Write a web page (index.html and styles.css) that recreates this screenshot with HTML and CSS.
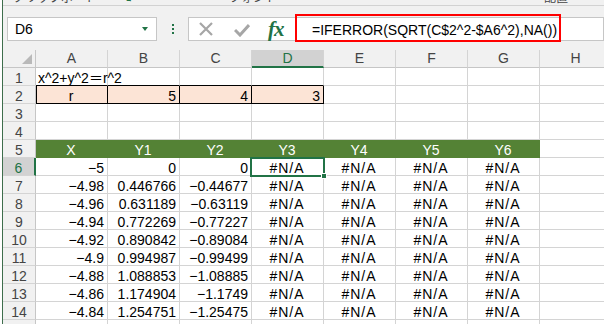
FILE: index.html
```html
<!DOCTYPE html>
<html lang="ja">
<head>
  <meta charset="UTF-8" />
  <meta name="viewport" content="width=device-width, initial-scale=1" />
  <title>Book1 - Excel</title>
  <link rel="stylesheet" href="styles.css">
</head>

<body>
  <div class="window">

    <!-- bottom edge of the ribbon -->
    <div class="ribbon-tail">
      <span class="grp grp-clip">クリップボード</span>
      <span class="launcher">↘</span>
      <span class="grp grp-font">フォント</span>
      <span class="grp grp-align">配置</span>
    </div>

    <!-- Formula bar -->
    <div class="formula-bar">
      <div class="name-box">
        <span>D6</span>
        <span class="drop"></span>
      </div>
      <div class="grip"><i></i><i></i><i></i></div>
      <div class="fx-buttons">
        <svg class="btn-cancel" width="16" height="16" viewBox="0 0 16 16">
          <path d="M2 2 L14 14 M14 2 L2 14" stroke="#a6a6a6" stroke-width="2.2" fill="none" />
        </svg>
        <svg class="btn-enter" width="16" height="14" viewBox="0 0 16 14">
          <path d="M1 7 L6 12 L15 2" stroke="#a6a6a6" stroke-width="3" fill="none" />
        </svg>
        <span class="fx">fx</span>
      </div>
      <div class="formula-input">
        <span>=IFERROR(SQRT(C$2^2-$A6^2),NA())</span>
        <div class="highlight"></div>
      </div>
    </div>

    <!-- Worksheet -->
    <div class="sheet" id="sheet"></div>
  </div>

  <script>
    const sheet = document.getElementById('sheet');
    const cols = ['A', 'B', 'C', 'D', 'E', 'F', 'G', 'H'];

    function addCell(text, cls) {
      const div = document.createElement('div');
      div.className = cls;
      div.textContent = text;
      sheet.appendChild(div);
      return div;
    }

    // column headers
    const corner = addCell('', 'corner');
    corner.innerHTML = '<svg width="10" height="10" viewBox="0 0 10 10"><polygon points="10,0 10,10 0,10" fill="#b9b9b9"/></svg>';
    cols.forEach(c => addCell(c, c === 'D' ? 'col-head active' : 'col-head'));

    // x, y1, y2 for rows 6..15
    const data = [
      ['−5', '0', '0'],
      ['−4.98', '0.446766', '−0.44677'],
      ['−4.96', '0.631189', '−0.63119'],
      ['−4.94', '0.772269', '−0.77227'],
      ['−4.92', '0.890842', '−0.89084'],
      ['−4.9', '0.994987', '−0.99499'],
      ['−4.88', '1.088853', '−1.08885'],
      ['−4.86', '1.174904', '−1.1749'],
      ['−4.84', '1.254751', '−1.25475'],
      ['−4.82', '1.329511', '−1.32951']
    ];

    for (let r = 1; r <= 15; r++) {
      addCell(r, r === 6 ? 'row-head active' : 'row-head');

      cols.forEach((c, i) => {
        let text = '';
        let cls = 'cell';

        if (r === 1) {
          if (i === 0) text = 'x^2+y^2＝r^2';
          if (i < 4) cls += ' over-box';
        } else if (r === 2) {
          if (i === 0) { text = 'r'; cls += ' peach boxed first center'; }
          if (i === 1) { text = '5'; cls += ' peach boxed num'; }
          if (i === 2) { text = '4'; cls += ' peach boxed num'; }
          if (i === 3) { text = '3'; cls += ' peach boxed num'; }
        } else if (r === 5) {
          if (i < 7) {
            text = i === 0 ? 'X' : 'Y' + i;
            cls += ' head';
          }
        } else if (r >= 6) {
          const row = data[r - 6];
          if (i < 3) { text = row[i]; cls += ' num'; }
          else if (i < 7) { text = '#N/A'; cls += ' center err'; }
          if (r === 6 && c === 'D') cls += ' selected';
        }

        addCell(text, cls);
      });
    }
  </script>
</body>
</html>
```

FILE: styles.css
```css
body {
  margin: 0;
  background-color: #fff;
  font-family: 'Liberation Sans', 'Noto Sans CJK JP', sans-serif;
  font-size: 14px;
  color: #000;
  overflow: hidden;
}

.window {
  margin-left: 2px;
  border-left: 1px solid #3e6e4c;
  height: 324px;
  overflow: hidden;
  background-color: #f1f1f1;
}

/* Ribbon tail */
.ribbon-tail {
  display: flex;
  height: 5px;
  overflow: hidden;
  border-bottom: 1px solid #d2d2d2;
  font-size: 12px;
  line-height: 12px;
  color: #444;
}

.ribbon-tail span {
  margin-top: -8px;
  white-space: nowrap;
}

.grp-clip {
  margin-left: 10px;
}

.launcher {
  margin-left: 24px;
  color: #217346;
}

.grp-font {
  margin-left: 96px;
}

.grp-align {
  margin-left: 267px;
}

/* Formula bar */
.formula-bar {
  display: flex;
  align-items: center;
  padding: 11px 0 9px 4px;
}

.name-box {
  display: flex;
  justify-content: space-between;
  align-items: center;
  box-sizing: border-box;
  width: 150px;
  height: 24px;
  padding: 0 8px 0 7px;
  background-color: #fff;
  border: 1px solid #c6c6c6;
}

.drop {
  width: 0;
  height: 0;
  border-left: 3px solid transparent;
  border-right: 3px solid transparent;
  border-top: 4px solid #217346;
}

.grip {
  display: flex;
  flex-direction: column;
  gap: 2px;
  margin-left: 15px;
}

.grip i {
  display: block;
  width: 2px;
  height: 2px;
  background-color: #217346;
}

.fx-buttons {
  display: flex;
  align-items: center;
  box-sizing: border-box;
  width: 107px;
  height: 24px;
  margin-left: 14px;
  background-color: #fff;
  border: 1px solid #c6c6c6;
  border-right: none;
}

.btn-cancel {
  margin-left: 9px;
}

.btn-enter {
  margin-left: 20px;
  margin-top: 2px;
}

.fx {
  margin-left: 18px;
  font-family: 'Liberation Serif', serif;
  font-style: italic;
  font-weight: bold;
  font-size: 21px;
  color: #217346;
  letter-spacing: -1px;
}

.formula-input {
  position: relative;
  flex: 1;
  box-sizing: border-box;
  height: 24px;
  padding: 1px 0 0 16px;
  line-height: 22px;
  background-color: #fff;
  border: 1px solid #c6c6c6;
  white-space: nowrap;
}

.highlight {
  position: absolute;
  left: -1px;
  top: -4px;
  width: 266px;
  height: 28px;
  box-sizing: border-box;
  border: 2px solid #f00;
}

/* Worksheet grid */
.sheet {
  display: grid;
  grid-template-columns: 33px repeat(8, 72px);
  grid-auto-rows: 18px;
  background-color: #fff;
}

.sheet > div {
  box-sizing: border-box;
  white-space: nowrap;
}

.corner {
  display: flex;
  justify-content: flex-end;
  align-items: flex-end;
  padding: 0 3px 3px 0;
  background-color: #f1f1f1;
  border-right: 1px solid #c6c6c6;
  border-bottom: 1px solid #c6c6c6;
}

.col-head {
  text-align: center;
  line-height: 16px;
  color: #444;
  background-color: #f1f1f1;
  border-right: 1px solid #d4d4d4;
  border-bottom: 1px solid #c6c6c6;
}

.col-head.active {
  background-color: #d2d2d2;
  color: #217346;
  border-bottom: 2px solid #217346;
}

.row-head {
  text-align: center;
  padding-top: 3px;
  line-height: 15px;
  color: #444;
  background-color: #f1f1f1;
  border-right: 1px solid #c6c6c6;
  border-bottom: 1px solid #d4d4d4;
}

.row-head.active {
  background-color: #d2d2d2;
  color: #217346;
  border-right: 2px solid #217346;
}

.cell {
  padding: 2px 3px 0 2px;
  line-height: 16px;
  border-right: 1px solid #d4d4d4;
  border-bottom: 1px solid #d4d4d4;
}

.num {
  text-align: right;
}

.center {
  text-align: center;
}

.err {
  letter-spacing: 1px;
}

.over-box {
  border-bottom-color: #000;
}

.peach {
  background-color: #fce4d6;
}

.boxed {
  border-right-color: #000;
  border-bottom-color: #000;
}

.boxed.first {
  box-shadow: inset 1px 0 0 #000;
}

.head {
  text-align: center;
  color: #fff;
  background-color: #548235;
  border-right-color: #548235;
  border-bottom-color: #548235;
}

.selected {
  position: relative;
}

.selected::after {
  content: '';
  position: absolute;
  left: -2px;
  top: -1px;
  right: -2px;
  bottom: -2px;
  border: 2px solid #217346;
}

.selected::before {
  content: '';
  position: absolute;
  right: -4px;
  bottom: -4px;
  width: 4px;
  height: 4px;
  background-color: #217346;
  border: 1px solid #fff;
  z-index: 1;
}
```
